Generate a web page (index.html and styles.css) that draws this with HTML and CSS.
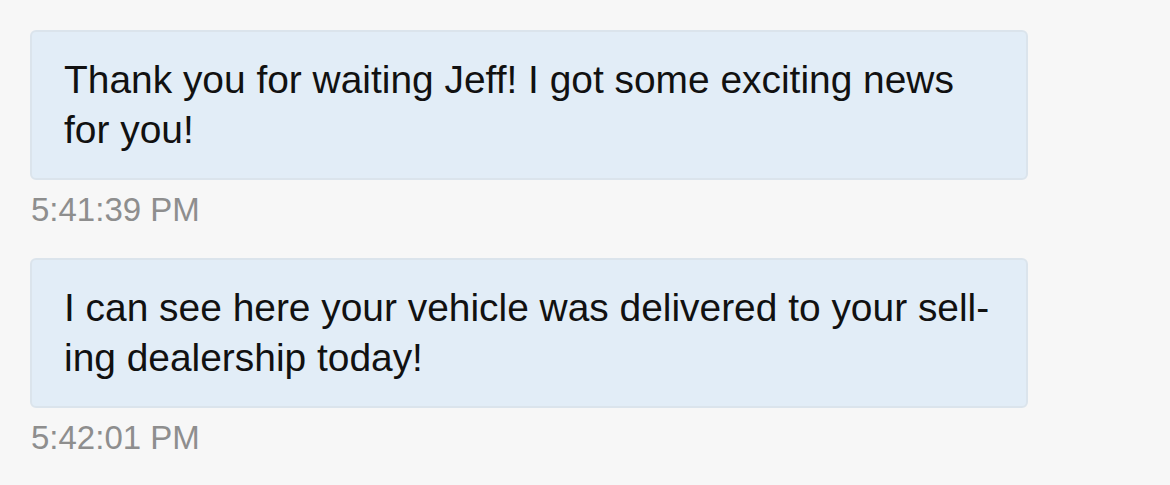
FILE: index.html
```html
<!DOCTYPE html>
<html lang="en">
<head>
<meta charset="utf-8">
<link rel="stylesheet" href="styles.css">
</head>
<body>
<div class="chat">
  <div class="msg">
    <div class="bubble">Thank you for waiting Jeff! I got some exciting news for you!</div>
    <div class="time">5:41:39 PM</div>
  </div>
  <div class="msg">
    <div class="bubble">I can see here your vehicle was delivered to your sell&shy;ing dealership today!</div>
    <div class="time">5:42:01 PM</div>
  </div>
</div>
</body>
</html>
```
FILE: styles.css
```css
html, body {
  margin: 0;
  padding: 0;
  background: #f7f7f7;
  font-family: "Liberation Sans", Arial, sans-serif;
}
.chat {
  padding: 30px 0 0 30px;
  display: flex;
  flex-direction: column;
}
.msg {
  width: 998px;
}
.bubble {
  box-sizing: border-box;
  height: 150px;
  background: #e2edf7;
  border: 2px solid #dbe4ec;
  border-radius: 6px;
  padding: 23px 28px 0 32px;
  font-size: 38.9px;
  line-height: 50px;
  color: #111;
}
.time {
  height: 78px;
  padding-top: 10px;
  box-sizing: border-box;
  font-size: 33px;
  line-height: 40px;
  color: #8e8e8e;
  padding-left: 1px;
}
```
